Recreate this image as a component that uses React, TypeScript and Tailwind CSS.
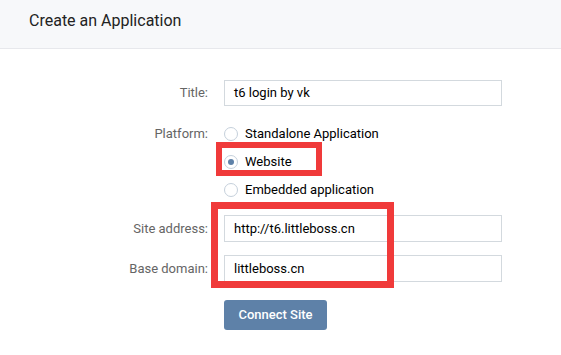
export default function App() {
  const options = [
    { label: "Standalone Application", checked: false, h: "h-[29px]" },
    { label: "Website", checked: true, h: "h-[28px]" },
    { label: "Embedded application", checked: false, h: "h-[28px]" },
  ];

  return (
    <div className="relative h-[355px] w-[561px] bg-white font-['Roboto',sans-serif] text-[13px] text-black">
      {/* header */}
      <div className="flex h-[49px] items-center border-b border-[#e7e8ec] bg-[#f7f8fa] px-[29px] pb-[7px] text-[16px] text-[#222]">
        Create an Application
      </div>

      <div className="pt-[31px]">
        <div className="flex items-center">
          <span className="w-[208px] text-right text-[#656565]">Title:</span>
          <div className="ml-[16px] flex h-[26px] w-[278px] items-center border border-[#d3d9de] px-[9px]">
            t6 login by vk
          </div>
        </div>

        <div className="mt-[13px] flex items-start">
          <span className="flex h-[29px] w-[208px] items-center justify-end text-[#656565]">Platform:</span>
          <div className="ml-[16px] flex flex-col">
            {options.map((o) => (
              <div key={o.label} className={`flex items-center gap-[7px] ${o.h}`}>
                <span className="flex h-[14px] w-[14px] items-center justify-center rounded-full border border-[#c5d0db]">
                  {o.checked && <span className="h-[6px] w-[6px] rounded-full bg-[#5e81a8]" />}
                </span>
                <span>{o.label}</span>
              </div>
            ))}
          </div>
        </div>

        <div className="mt-[11px] flex items-center">
          <span className="w-[208px] text-right text-[#656565]">Site address:</span>
          <div className="ml-[16px] flex h-[27px] w-[278px] items-center border border-[#d3d9de] px-[9px]">
            http://t6.littleboss.cn
          </div>
        </div>

        <div className="mt-[13px] flex items-center">
          <span className="w-[208px] text-right text-[#656565]">Base domain:</span>
          <div className="ml-[16px] flex h-[27px] w-[278px] items-center border border-[#d3d9de] px-[9px]">
            littleboss.cn
          </div>
        </div>

        <div className="ml-[224px] mt-[18px]">
          <button className="h-[30px] w-[103px] rounded-[3px] bg-[#5e81a8] text-[13px] font-medium text-white">
            Connect Site
          </button>
        </div>
      </div>

      {/* annotation boxes */}
      <div className="absolute left-[216px] top-[142px] h-[34px] w-[106px] border-[6px] border-[#f03a3a]" />
      <div className="absolute left-[211px] top-[202px] h-[86px] w-[183px] border-[7px] border-[#f03a3a]" />
    </div>
  );
}
